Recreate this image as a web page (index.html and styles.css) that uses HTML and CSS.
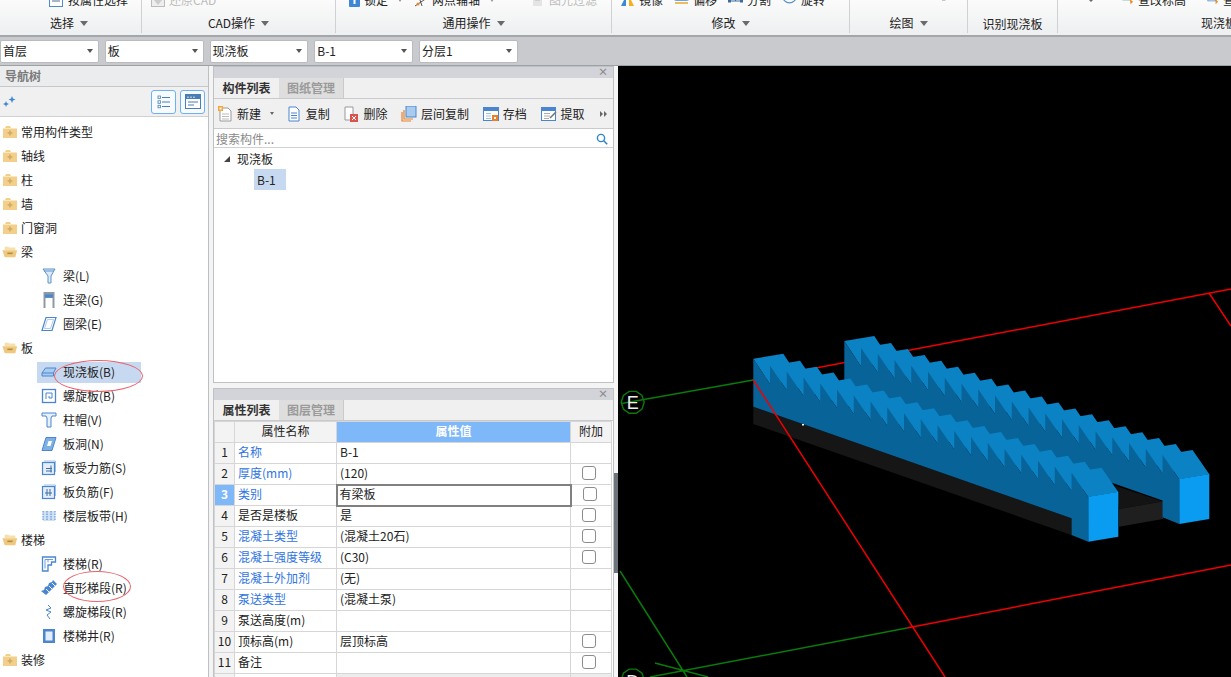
FILE: index.html
```html
<!DOCTYPE html>
<html lang="zh-CN">
<head>
<meta charset="utf-8">
<title>现浇板</title>
<link rel="stylesheet" href="styles.css">
</head>
<body>
<svg class="defs" aria-hidden="true">
  <symbol id="f-closed" viewBox="0 0 16 14">
    <path d="M1 3.500V13h14V3H9L8 1H4L3 3z" fill="#f2d08c"/>
    <path d="M1 3.500h14" stroke="#fae6bd"/>
    <path d="M8 5.500v5M5.500 8h5" stroke="#d3ab62" stroke-width="1.600"/>
  </symbol>
  <symbol id="f-open" viewBox="0 0 18 14">
    <path d="M3 3V1h4l1 1h7v3H3z" fill="#f7e0ae"/>
    <path d="M0.500 5H17l-2 8H3z" fill="#efc97f"/>
    <path d="M6 8.500h6" stroke="#b48b40" stroke-width="1.800"/>
  </symbol>
</svg>

<header class="ribbon">
  <section class="group g0">
    <div class="tools">
      <span class="tool"><svg class="ti" viewBox="0 0 14 14"><rect x=".5" y=".5" width="13" height="13" fill="#fff" stroke="#4f8ccc"/><path d="M3 5h8M3 8h8" stroke="#4f6f90"/></svg>按属性选择</span>
    </div>
    <div class="label">选择<i class="caret"></i></div>
  </section>
  <section class="group g1">
    <div class="tools">
      <span class="tool off"><svg class="ti" viewBox="0 0 14 14"><rect x=".5" y=".5" width="13" height="13" fill="#eee" stroke="#bbb"/><path d="M3 7h8l-4 5z" fill="#ccc"/></svg>还原CAD</span>
    </div>
    <div class="label">CAD操作<i class="caret"></i></div>
  </section>
  <section class="group g2">
    <div class="tools">
      <span class="tool"><svg class="ti narrow" viewBox="0 0 11 14"><rect width="11" height="14" rx="1" fill="#3f86d4"/><rect x="4.500" y="6" width="2" height="5" fill="#fff"/></svg>锁定<i class="mini"></i></span>
      <span class="tool"><svg class="ti" viewBox="0 0 14 14"><path d="M1 13L13 5M4 1l4 12" stroke="#555" fill="none"/><circle cx="4" cy="11" r="1.500" fill="#e88a2c"/></svg>两点辅轴<i class="mini"></i></span>
      <span class="tool off far"><svg class="ti" viewBox="0 0 14 14"><path d="M2 1h9v12H2z" fill="#e4e4e4"/><path d="M4 4h5M4 7h5" stroke="#bbb"/></svg>图元过滤</span>
    </div>
    <div class="label">通用操作<i class="caret"></i></div>
  </section>
  <section class="group g3">
    <div class="tools">
      <span class="tool"><svg class="ti" viewBox="0 0 15 14"><path d="M1 13L6 3v10z" fill="#3f86d4"/><path d="M9 3l5 10H9z" fill="#f2b01e"/></svg>镜像</span>
      <span class="tool"><svg class="ti" viewBox="0 0 15 14"><rect x=".5" y=".5" width="14" height="7" rx="1" fill="#fff" stroke="#6ea6dd"/><path d="M1 10h13" stroke="#e8a829" stroke-width="1.500"/></svg>偏移</span>
      <span class="tool"><svg class="ti" viewBox="0 0 15 14"><path d="M1 8h13M7.500 0v8" stroke="#3d6d9e" fill="none"/><rect y="6.500" width="3" height="3" fill="#3d6d9e"/><rect x="12" y="6.500" width="3" height="3" fill="#3d6d9e"/></svg>分割</span>
      <span class="tool"><svg class="ti" viewBox="0 0 15 14"><circle cx="7.500" cy="3" r="6.800" fill="none" stroke="#5b93cc" stroke-width="1.200"/></svg>旋转</span>
    </div>
    <div class="label">修改<i class="caret"></i></div>
  </section>
  <section class="group g4">
    <div class="tools">
      <svg class="ti" viewBox="0 0 14 14"><path d="M12 0v6H2" fill="none" stroke="#5a7ea5"/><rect x="0" y="4" width="3" height="3" fill="#fff" stroke="#5a7ea5" stroke-width=".800"/></svg>
    </div>
    <div class="label">绘图<i class="caret"></i></div>
  </section>
  <section class="group g5">
    <div class="tools"></div>
    <div class="label">识别现浇板</div>
  </section>
  <section class="group g6">
    <div class="tools">
      <i class="caret top-caret"></i>
      <span class="tool"><svg class="ti" viewBox="0 0 14 14"><rect x="1" y="0" width="8" height="7" fill="#fff" stroke="#8aa"/><path d="M9 6l4 3-3 3z" fill="#e8912a"/></svg>查改标高</span>
      <span class="tool"><svg class="ti" viewBox="0 0 14 14"><rect x="1" y="0" width="9" height="8" fill="#fff" stroke="#5b93cc"/><path d="M10 6l3 3-3 3z" fill="#e8912a"/></svg>查改板厚</span>
    </div>
    <div class="label">现浇板二次编辑</div>
  </section>
</header>

<div class="selectors">
  <div class="sel">首层<i class="sel-caret"></i></div>
  <div class="sel">板<i class="sel-caret"></i></div>
  <div class="sel">现浇板<i class="sel-caret"></i></div>
  <div class="sel">B-1<i class="sel-caret"></i></div>
  <div class="sel">分层1<i class="sel-caret"></i></div>
</div>

<main class="main">
  <nav class="nav">
    <div class="nav-head">导航树</div>
    <div class="nav-tools">
      <svg class="sparkle" viewBox="0 0 14 12"><path d="M9 0l1 2.500L12.500 3.500 10 4.500 9 7 8 4.500 5.500 3.500 8 2.500z" fill="#3f86d4"/><path d="M3 5l.8 2L6 8 3.800 9 3 11 2.200 9 0 8l2.200-1z" fill="#3f86d4"/></svg>
      <span class="nt-btn"><svg viewBox="0 0 14 14" width="14" height="14"><path d="M5 2.500h8M5 7h8M5 11.500h8" stroke="#4a7fb5"/><rect x="1" y="1" width="2.500" height="2.500" fill="none" stroke="#4a7fb5" stroke-width=".800"/><rect x="1" y="5.800" width="2.500" height="2.500" fill="none" stroke="#4a7fb5" stroke-width=".800"/><rect x="1" y="10.300" width="2.500" height="2.500" fill="none" stroke="#4a7fb5" stroke-width=".800"/></svg></span>
      <span class="nt-btn"><svg viewBox="0 0 16 15" width="16" height="15"><rect x=".5" y=".5" width="15" height="14" fill="#fff" stroke="#4a7fb5"/><rect x="1" y="1" width="14" height="4" fill="#4a7fb5"/><path d="M3 2.500v1.500M6 2.500v1.500M9 2.500v1.500" stroke="#fff"/><path d="M3 8h10M3 11h6" stroke="#4a7fb5"/></svg></span>
    </div>
    <div class="tree">
      <div class="fold"><svg class="fi"><use href="#f-closed"/></svg>常用构件类型</div>
      <div class="fold"><svg class="fi"><use href="#f-closed"/></svg>轴线</div>
      <div class="fold"><svg class="fi"><use href="#f-closed"/></svg>柱</div>
      <div class="fold"><svg class="fi"><use href="#f-closed"/></svg>墙</div>
      <div class="fold"><svg class="fi"><use href="#f-closed"/></svg>门窗洞</div>
      <div class="fold"><svg class="fi"><use href="#f-open"/></svg>梁</div>
      <div class="leaf"><span class="leaf-in"><svg class="li" viewBox="0 0 16 16"><path d="M2 1h12L10 8v7H7V8z" fill="#dce9f7" stroke="#5b93cc"/><path d="M3 3h10" stroke="#5b93cc"/></svg>梁(L)</span></div>
      <div class="leaf"><span class="leaf-in"><svg class="li" viewBox="0 0 16 16"><path d="M2.500 0h11v16h-2V6h-7v10h-2z" fill="#8d99a6"/><rect x="4" y="2.500" width="8" height="3" fill="#4a86d0"/></svg>连梁(G)</span></div>
      <div class="leaf"><span class="leaf-in"><svg class="li" viewBox="0 0 16 16"><path d="M5 1.500h10l-4 13H1z" fill="#fff" stroke="#4a86d0" stroke-width="1.200"/><path d="M6.500 3.500h6l-3 9h-6z" fill="none" stroke="#9cc0e8" stroke-width=".800"/></svg>圈梁(E)</span></div>
      <div class="fold"><svg class="fi"><use href="#f-open"/></svg>板</div>
      <div class="leaf"><span class="leaf-in on"><svg class="li" viewBox="0 0 16 16"><path d="M1 9l3.500-5H15l-2.500 5v3H1z" fill="#a9cbee" stroke="#4a86d0"/><path d="M1 9h11.500" stroke="#4a86d0"/></svg>现浇板(B)</span></div>
      <div class="leaf"><span class="leaf-in"><svg class="li" viewBox="0 0 16 16"><rect x="1.500" y="1.500" width="13" height="13" fill="#fff" stroke="#4a86d0" stroke-width="1.300"/><path d="M5 11V5h6v5H8V8" fill="none" stroke="#4a86d0"/></svg>螺旋板(B)</span></div>
      <div class="leaf"><span class="leaf-in"><svg class="li" viewBox="0 0 16 16"><path d="M1 1h14v3h-4l-1 2v9H6V6L5 4H1z" fill="#e6f0fa" stroke="#4a86d0"/></svg>柱帽(V)</span></div>
      <div class="leaf"><span class="leaf-in"><svg class="li" viewBox="0 0 16 16"><path d="M5 1.500h10l-4 13H1z" fill="#7fb0e4" stroke="#4a86d0"/><path d="M7.500 5h3.500l-1.500 5H6z" fill="#fff"/></svg>板洞(N)</span></div>
      <div class="leaf"><span class="leaf-in"><svg class="li" viewBox="0 0 16 16"><rect x="1.500" y="2.500" width="12" height="12" fill="#e3eefa" stroke="#4a86d0" stroke-width="1.200"/><path d="M3 1h11.500v11" fill="none" stroke="#9cc0e8"/><path d="M5 8.500h6M5 11h6M10 5.500v7" stroke="#3f6f9f"/></svg>板受力筋(S)</span></div>
      <div class="leaf"><span class="leaf-in"><svg class="li" viewBox="0 0 16 16"><rect x="1.500" y="2.500" width="12" height="12" fill="#e3eefa" stroke="#4a86d0" stroke-width="1.200"/><path d="M3 1h11.500v11" fill="none" stroke="#9cc0e8"/><path d="M6 5v7M9 5v7M4 9h7" stroke="#3f6f9f"/></svg>板负筋(F)</span></div>
      <div class="leaf"><span class="leaf-in"><svg class="li" viewBox="0 0 16 16"><rect x="2" y="3" width="12" height="10" fill="#cfe1f5"/><path d="M2 3v10M6 3v10M10 3v10M14 3v10" stroke="#4a86d0" stroke-dasharray="1.500 1"/></svg>楼层板带(H)</span></div>
      <div class="fold"><svg class="fi"><use href="#f-open"/></svg>楼梯</div>
      <div class="leaf"><span class="leaf-in"><svg class="li" viewBox="0 0 16 16"><path d="M1.500 1h13v5h-4v3H7v6H1.500z" fill="#fff" stroke="#4a86d0" stroke-width="1.300"/><path d="M4 3.500h8M4 3.500v9M7 3.500v3" stroke="#4a86d0" stroke-width=".800"/></svg>楼梯(R)</span></div>
      <div class="leaf"><span class="leaf-in"><svg class="li" viewBox="0 0 16 16"><path d="M0 11l3-1 1-3 3-1 1-3 3-1 1-2 4 4-11 11z" fill="#4a86d0"/><path d="M5 9l3 3M8 6l3 3M11 3l3 3" stroke="#fff"/></svg>直形梯段(R)</span></div>
      <div class="leaf"><span class="leaf-in"><svg class="li" viewBox="0 0 16 16"><path d="M7 1l3 3-5 2 5 2-4 3 3 4" fill="none" stroke="#4a86d0"/></svg>螺旋梯段(R)</span></div>
      <div class="leaf"><span class="leaf-in"><svg class="li" viewBox="0 0 16 16"><rect x="2" y="1" width="12" height="14" fill="#4a86d0"/><rect x="4.500" y="3.500" width="7" height="9" fill="#e3eefa"/></svg>楼梯井(R)</span></div>
      <div class="fold"><svg class="fi"><use href="#f-closed"/></svg>装修</div>
      <i class="mark mark-a"></i>
      <i class="mark mark-b"></i>
    </div>
  </nav>

  <div class="panels">
    <section class="panel list-panel">
      <div class="p-head">×</div>
      <div class="tabs"><span class="tab on">构件列表</span><span class="tab">图纸管理</span></div>
      <div class="p-tools">
        <span class="pt new"><svg class="pi" viewBox="0 0 16 16"><path d="M3 2h8l3 3v10H3z" fill="#fff" stroke="#999"/><path d="M5 8h7M5 10.500h7M5 13h7" stroke="#bbb"/><rect x="1" y="0" width="5" height="5" fill="#f2a53a"/><rect x="2.500" y="1.500" width="2" height="2" fill="#fff"/></svg>新建<i class="mini dark"></i></span>
        <span class="pt"><svg class="pi" viewBox="0 0 16 16"><path d="M3 1h7l3 3v11H3z" fill="#fff" stroke="#4a86d0"/><path d="M5 7h6M5 9.500h6M5 12h6" stroke="#4a86d0"/></svg>复制</span>
        <span class="pt"><svg class="pi" viewBox="0 0 16 16"><path d="M2 1h8v13H2z" fill="#fff" stroke="#999"/><rect x="7" y="8" width="8" height="8" fill="#d9534f"/><path d="M9 10l4 4M13 10l-4 4" stroke="#fff"/></svg>删除</span>
        <span class="pt"><svg class="pi" viewBox="0 0 16 16"><rect x="5" y="0" width="10" height="11" fill="#a9cbee" stroke="#4a86d0"/><path d="M3 4v9h9M1 6v9h9" fill="none" stroke="#e8812a" stroke-width="1.200"/></svg>层间复制</span>
        <span class="pt"><svg class="pi" viewBox="0 0 16 16"><rect x=".5" y="1.500" width="15" height="13" fill="#fff" stroke="#4a86d0"/><rect x="1" y="2" width="14" height="3" fill="#4a86d0"/><path d="M3 7.500h5M3 10h5M3 12.500h5" stroke="#9cc0e8"/><rect x="9" y="9" width="6" height="6" fill="#e8812a"/><rect x="11" y="11" width="2" height="2" fill="#fff"/></svg>存档</span>
        <span class="pt"><svg class="pi" viewBox="0 0 16 16"><rect x=".5" y="1.500" width="14" height="13" fill="#fff" stroke="#4a86d0"/><rect x="1" y="2" width="13" height="3" fill="#4a86d0"/><path d="M3 7.500h6M3 10h6M3 12.500h5" stroke="#aaa"/><path d="M9 12l6-6" stroke="#777" stroke-width="1.600"/></svg>提取</span>
        <span class="more"><i class="more-tri"></i><i class="more-tri"></i></span>
      </div>
      <div class="search">搜索构件...<svg class="mag" viewBox="0 0 12 12"><circle cx="5" cy="5" r="3.600" fill="none" stroke="#2d86c9" stroke-width="1.400"/><path d="M7.800 7.800l3.400 3.400" stroke="#2d86c9" stroke-width="1.600"/></svg></div>
      <div class="list-body">
        <div class="l-group"><i class="tri"></i>现浇板</div>
        <div class="l-item">B-1</div>
      </div>
    </section>

    <section class="panel prop-panel">
      <div class="p-head">×</div>
      <div class="tabs"><span class="tab on">属性列表</span><span class="tab">图层管理</span></div>
      <table class="props">
        <thead>
          <tr><th class="c-n"></th><th class="c-name">属性名称</th><th class="c-val hot">属性值</th><th class="c-add">附加</th></tr>
        </thead>
        <tbody>
          <tr><td class="c-n">1</td><td class="link">名称</td><td>B-1</td><td></td></tr>
          <tr><td class="c-n">2</td><td class="link">厚度(mm)</td><td>(120)</td><td class="chk"><i></i></td></tr>
          <tr><td class="c-n cur">3</td><td class="link">类别</td><td class="edit">有梁板</td><td class="chk"><i></i></td></tr>
          <tr><td class="c-n">4</td><td>是否是楼板</td><td>是</td><td class="chk"><i></i></td></tr>
          <tr><td class="c-n">5</td><td class="link">混凝土类型</td><td>(混凝土20石)</td><td class="chk"><i></i></td></tr>
          <tr><td class="c-n">6</td><td class="link">混凝土强度等级</td><td>(C30)</td><td class="chk"><i></i></td></tr>
          <tr><td class="c-n">7</td><td class="link">混凝土外加剂</td><td>(无)</td><td></td></tr>
          <tr><td class="c-n">8</td><td class="link">泵送类型</td><td>(混凝土泵)</td><td></td></tr>
          <tr><td class="c-n">9</td><td>泵送高度(m)</td><td></td><td></td></tr>
          <tr><td class="c-n">10</td><td>顶标高(m)</td><td>层顶标高</td><td class="chk"><i></i></td></tr>
          <tr><td class="c-n">11</td><td>备注</td><td></td><td class="chk"><i></i></td></tr>
          <tr class="last"><td class="c-n"></td><td></td><td></td><td></td></tr>
        </tbody>
      </table>
    </section>
  </div>

  <div class="splitter"><span class="grip"></span></div>

  <div class="canvas">
    <svg class="scene" viewBox="618 66 613 611" width="613" height="611">
      <defs>
        <g id="stair">
          <path fill="#0a82c4" d="M753.3,358.8 l30,-5 l16.75,25.4 l-30,5 z m16.75,6.94 l30,-5 l16.75,24.4 l-30,5 z m16.75,5.94 l30,-5 l16.75,24.4 l-30,5 z m16.75,5.94 l30,-5 l16.75,24.4 l-30,5 z m16.75,5.94 l30,-5 l16.75,24.4 l-30,5 z m16.75,5.94 l30,-5 l16.75,24.4 l-30,5 z m16.75,5.94 l30,-5 l16.75,24.4 l-30,5 z m16.75,5.94 l30,-5 l16.75,24.4 l-30,5 z m16.75,5.94 l30,-5 l16.75,24.4 l-30,5 z m16.75,5.94 l30,-5 l16.75,24.4 l-30,5 z m16.75,5.94 l30,-5 l16.75,24.4 l-30,5 z m16.75,5.94 l30,-5 l16.75,24.4 l-30,5 z m16.75,5.94 l30,-5 l16.75,24.4 l-30,5 z m16.75,5.94 l30,-5 l16.75,24.4 l-30,5 z m16.75,5.94 l30,-5 l16.75,24.4 l-30,5 z m16.75,5.94 l30,-5 l16.75,24.4 l-30,5 z m16.75,5.94 l30,-5 l16.75,24.4 l-30,5 z m16.75,5.94 l30,-5 l16.75,24.4 l-30,5 z m16.75,5.94 l30,-5 l16.75,24.4 l-30,5 z m16.75,5.94 l30,-5 l16.75,24.4 l-30,5 z"/>
          <path fill="#086398" d="M753.3,358.8 l16.75,25.4 v-18.46 l16.75,24.4 v-18.46 l16.75,24.4 v-18.46 l16.75,24.4 v-18.46 l16.75,24.4 v-18.46 l16.75,24.4 v-18.46 l16.75,24.4 v-18.46 l16.75,24.4 v-18.46 l16.75,24.4 v-18.46 l16.75,24.4 v-18.46 l16.75,24.4 v-18.46 l16.75,24.4 v-18.46 l16.75,24.4 v-18.46 l16.75,24.4 v-18.46 l16.75,24.4 v-18.46 l16.75,24.4 v-18.46 l16.75,24.4 v-18.46 l16.75,24.4 v-18.46 l16.75,24.4 v-18.46 l16.75,24.4 L1088.3,541.7 L1071.55,535 V518.3 L753.3,406.7 Z"/>
          <path fill="#0a9cf0" d="M1088.3,496.7 L1118.3,491.7 V536.7 L1088.3,541.7 Z"/>
        </g>
        <polygon id="octa" points="11.500,0 9.300,6.800 3.600,10.900 -3.600,10.900 -9.300,6.800 -11.500,0 -9.300,-6.800 -3.600,-10.900 3.600,-10.900 9.300,-6.800" fill="none" stroke="#0a7a0a" stroke-width="1.400"/>
      </defs>
      <g fill="none" stroke-width="1.500">
        <path stroke="#f00000" d="M753.300,380 L1231,289 M1209,293 L1231,326 M907,628 L1231,565"/>
        <path stroke="#0a7a0a" d="M621.500,403.500 L753.300,380 M620,571 L687,677 M650,677 L907,628 M655,663 L708,677"/>
      </g>
      <use href="#octa" transform="translate(632.7 402.3)"/>
      <use href="#octa" transform="translate(632.7 680)"/>
      <text class="axis" x="632.700" y="409">E</text>
      <text class="axis" x="632.700" y="688">D</text>
      <path fill="#141414" d="M1115,485.700 L1163,501.500 L1119,509 Z"/>
      <path fill="#1f1f1f" d="M1119,509 L1163,501.500 V519 L1119,526.700 Z"/>
      <use href="#stair" transform="translate(91 -17.700)"/>
      <path fill="#161616" d="M753.300,406.700 L1071.550,518.300 V535 L753.300,424 Z"/>
      <use href="#stair"/>
      <path stroke="#f00000" stroke-width="1.500" fill="none" d="M753.300,380 L945,677"/>
      <rect x="802" y="424" width="2" height="1.500" fill="#fff"/>
    </svg>
  </div>
</main>
</body>
</html>
```
FILE: styles.css
```css
* { box-sizing: border-box; }
html, body { margin: 0; height: 100%; }
body {
  width: 1231px;
  height: 677px;
  overflow: hidden;
  display: flex;
  flex-direction: column;
  font: 12px/16px "Noto Sans CJK SC", "Noto Sans", sans-serif;
  color: #222;
  background: #f4f4f4;
}
.defs { position: absolute; width: 0; height: 0; }
i { font-style: normal; display: inline-block; }

/* ribbon */
.ribbon {
  flex: none;
  height: 37px;
  display: flex;
  background: linear-gradient(#fbfbfb, #edeff0);
  border-bottom: 2px solid #a4a7aa;
  overflow: hidden;
}
.group {
  flex: none;
  height: 33px;
  display: flex;
  flex-direction: column;
  border-right: 1px solid #cfd1d3;
}
.g0 { width: 142px; }
.g1 { width: 194px; }
.g2 { width: 276px; }
.g3 { width: 238px; }
.g4 { width: 118px; }
.g5 { width: 90px; }
.g6 { flex: 1; border-right: 0; }
.tools {
  height: 14px;
  margin-top: -7px;
  display: flex;
  align-items: center;
  white-space: nowrap;
  line-height: 14px;
}
.g0 .tools { padding-left: 49px; }
.g0 .tool { gap: 5px; }
.g1 .tools { padding-left: 9px; }
.g2 .tools { padding-left: 13px; gap: 12px; }
.g3 .tools { padding-left: 8px; gap: 11px; }
.g3 .ti { width: 15px; }
.g4 .tools { padding-left: 92px; }
.g6 .tools { padding-left: 29px; gap: 21px; }
.g6 .ti { width: 12px; }
.g6 .top-caret { margin-right: 6px; }
.tool { display: flex; align-items: center; gap: 4px; flex: none; }
.tool.off { color: #bcbcbc; }
.tool.far { margin-left: 25px; }
.ti { width: 14px; height: 14px; flex: none; }
.ti.narrow { width: 11px; }
.label {
  margin-top: auto;
  padding: 1px 0 0 0;
  display: flex;
  align-items: center;
  justify-content: center;
  white-space: nowrap;
  height: 21px;
}
.g0 .label { padding-right: 3px; }
.g5 .label { padding: 4px 0 0; height: 23px; }
.g6 .label { justify-content: flex-start; padding-left: 143px; }
.caret {
  width: 0; height: 0;
  margin-left: 6px;
  border-left: 4px solid transparent;
  border-right: 4px solid transparent;
  border-top: 5px solid #6a6a6a;
}
.top-caret { margin: 0; border-top-width: 4px; }
.mini {
  width: 0; height: 0;
  margin-left: 6px;
  border-left: 2.500px solid transparent;
  border-right: 2.500px solid transparent;
  border-top: 3px solid #999;
}
.mini.dark { border-top-color: #666; margin-left: 5px; }

/* selector row */
.selectors {
  flex: none;
  height: 29px;
  padding-top: 3px;
  display: flex;
  gap: 6px;
  background: #c8cacd;
  border-bottom: 1px solid #9ea1a4;
}
.sel {
  width: 98.750px;
  height: 23px;
  padding: 0 0 1px 2px;
  display: flex;
  align-items: center;
  background: #fff;
  border: 1px solid #b9bbbe;
  border-radius: 2px;
}
.sel-caret {
  width: 0; height: 0;
  margin-left: auto;
  margin-right: 5px;
  border-left: 3px solid transparent;
  border-right: 3px solid transparent;
  border-top: 4px solid #555;
}

/* main */
.main { flex: 1; min-height: 0; display: flex; }

/* nav */
.nav {
  width: 209px;
  flex: none;
  margin-right: 4px;
  display: flex;
  flex-direction: column;
  background: #fff;
  border-right: 1px solid #bdbfc2;
}
.nav-head {
  height: 21px;
  padding-left: 5px;
  line-height: 20px;
  color: #7a7a7a;
  font-weight: 700;
  background: #ebecee;
  border-bottom: 1px solid #c5c7ca;
}
.nav-tools {
  height: 30px;
  display: flex;
  align-items: center;
  gap: 4px;
  padding: 0 3px 0 3px;
  background: #f0f0f0;
  border-bottom: 1px solid #cfd1d3;
}
.sparkle { width: 14px; height: 12px; margin-right: auto; }
.nt-btn {
  width: 25px;
  height: 24px;
  display: flex;
  align-items: center;
  justify-content: center;
  background: #f7fbff;
  border: 1px solid #6fb0ee;
  border-radius: 3px;
}
.tree { position: relative; padding-top: 3px; flex: 1; overflow: hidden; }
.fold {
  height: 24px;
  padding-left: 2px;
  display: flex;
  align-items: center;
  gap: 3px;
}
.fi { width: 16px; height: 14px; flex: none; }
.leaf { height: 24px; padding-left: 37px; display: flex; align-items: center; }
.leaf-in {
  width: 104px;
  height: 21px;
  padding-left: 4px;
  display: flex;
  align-items: center;
  gap: 6px;
}
.leaf-in.on { background: #c7d9f0; }
.li { width: 16px; height: 16px; flex: none; }
.mark {
  position: absolute;
  border: 1px solid #e8636b;
  border-radius: 50%;
}
.mark-a { left: 54px; top: 243px; width: 89px; height: 32px; }
.mark-b { left: 63px; top: 454px; width: 68px; height: 31px; }

/* panels */
.panels { width: 401px; flex: none; display: flex; flex-direction: column; gap: 5px; }
.panel {
  display: flex;
  flex-direction: column;
  background: #fff;
  border: 1px solid #bfc1c4;
}
.list-panel { height: 317px; }
.prop-panel { flex: 1; min-height: 0; overflow: hidden; border-bottom: 0; }
.p-head {
  height: 11px;
  flex: none;
  padding-right: 5px;
  text-align: right;
  line-height: 10px;
  font-size: 10px;
  color: #8a8a8a;
  font-weight: 700;
  background: #d2d4d9;
}
.tabs {
  height: 21px;
  flex: none;
  display: flex;
  background: #f0f0f0;
  border-bottom: 1px solid #c8cacd;
}
.tab {
  width: 65px;
  text-align: center;
  line-height: 20px;
  font-weight: 700;
  color: #9a9a9a;
  background: #dedede;
  border-right: 1px solid #c8cacd;
}
.tab.on { color: #333; background: #f0f0f0; border-right: 0; }
.p-tools {
  height: 30px;
  flex: none;
  padding: 0 3px;
  display: flex;
  align-items: center;
  gap: 13.700px;
  background: #f0f0f0;
  border-bottom: 1px solid #c8cacd;
  white-space: nowrap;
}
.pt { display: flex; align-items: center; gap: 4px; flex: none; }
.pt.new { width: 55px; }
.pi { width: 16px; height: 16px; flex: none; }
.more { margin-left: auto; padding-right: 3px; display: flex; gap: 1px; }
.more-tri {
  width: 0; height: 0;
  border-top: 3px solid transparent;
  border-bottom: 3px solid transparent;
  border-left: 3px solid #666;
}
.search {
  height: 19px;
  flex: none;
  padding: 2px 5px 0 2px;
  display: flex;
  align-items: center;
  justify-content: space-between;
  color: #8a8a8a;
  border-bottom: 1px solid #cfd1d3;
}
.mag { width: 12px; height: 12px; }
.list-body { flex: 1; }
.l-group { height: 21px; display: flex; align-items: center; padding-left: 10px; gap: 7px; }
.tri {
  width: 0; height: 0;
  border-bottom: 6px solid #444;
  border-left: 6px solid transparent;
}
.l-item {
  width: 32px;
  height: 21px;
  margin-left: 40px;
  padding-left: 3px;
  line-height: 21px;
  background: #c7d9f0;
}

/* table */
.props {
  width: 397px;
  flex: none;
  border-collapse: collapse;
  table-layout: fixed;
}
.props th, .props td {
  height: 21px;
  padding: 0 0 2px 3px;
  border: 1px solid #d6d6d6;
  font-weight: 400;
  white-space: nowrap;
  overflow: hidden;
  line-height: 16px;
  text-align: left;
}
.props .c-n { width: 20px; padding: 0 0 2px; text-align: center; background: #f3f3f3; }
.props .c-name { width: 102px; text-align: center; background: #f3f3f3; padding: 0 0 2px; }
.props .c-val { width: 234px; text-align: center; padding: 0 0 2px; }
.props .c-add { width: 41px; text-align: center; background: #f3f3f3; padding: 0 0 2px; }
.props .hot { background: #7eb8f8; color: #fff; font-weight: 700; }
.props .cur { background: #7eb8f8; color: #fff; font-weight: 700; }
.props .link { color: #2f74e0; }
.props .edit { border: 2px solid #808080; padding-left: 2px; }
.props .chk { padding: 0 0 3px 11px; }
.chk i {
  display: block;
  width: 14px;
  height: 14px;
  background: #fff;
  border: 1px solid #8c8c8c;
  border-radius: 3px;
}
.props .last td:nth-child(3), .props .last td:nth-child(4) { background: #ececec; }

/* splitter */
.splitter { width: 4px; flex: none; padding-top: 407px; background: #f6f6f6; }
.grip { display: block; height: 100px; background: #6d747c; }

/* canvas */
.canvas { flex: 1; min-width: 0; background: #000; overflow: hidden; }
.scene { display: block; }
.axis {
  fill: #eee;
  font: 18px "Liberation Sans", sans-serif;
  text-anchor: middle;
}
```
